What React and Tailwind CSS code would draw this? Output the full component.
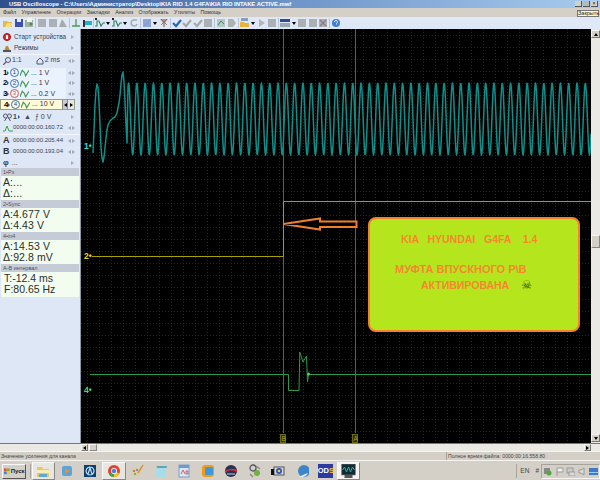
const FONT = "font-['Liberation_Sans',Arial,sans-serif]";

const menuItems = ["Файл", "Управление", "Операции", "Закладки", "Анализ", "Отображать", "Утилиты", "Помощь"];

// waveform of channel 1: the disturbance at the start, then a steady sine
const buildWave = () => {
  const pts = [
    [93, 153], [94, 130], [95, 105], [96, 90], [97, 84], [98, 88], [99, 102], [100, 125], [101, 147], [102, 158], [103, 162],
    [104, 157], [105, 148], [106, 138], [107, 130], [108, 125], [110, 121], [113, 118], [115, 117], [117, 113], [119, 103],
    [120, 95], [121, 84], [122, 75], [123, 72], [124, 82], [125, 102], [126, 125], [127, 143],
  ];
  for (let x = 128; x <= 591; x += 0.5) {
    pts.push([x, 119 + 36 * Math.cos(((x - 132.7) / 8.305) * 2 * Math.PI)]);
  }
  return pts.map((p) => p.join(",")).join(" ");
};

const Ico = ({ children, className = "" }) => (
  <svg viewBox="0 0 10 10" className={"w-[10px] h-[10px] shrink-0 " + className}>
    {children}
  </svg>
);

const Drop = () => <div className="w-0 h-0 border-x-[2px] border-x-transparent border-t-[3px] border-t-black ml-[1px] mr-[1px]" />;

const Sep = () => <div className="w-px h-[10px] bg-[#b9c4d8] mx-[0.5px]" />;

const GrayDoc = ({ x }) => (
  <Ico>
    <rect x="1" y="1" width="8" height="8" fill="#aab0b4" />
    {x && <path d="M2 2l6 6M8 2l-6 6" stroke="#8e7e7e" strokeWidth="1.4" />}
  </Ico>
);

const Check = ({ color }) => (
  <Ico>
    <path d="M1 5l3 3 5-6" fill="none" stroke={color} strokeWidth="2.2" />
  </Ico>
);

const Wavelet = ({ color = "#2f7f5f" }) => (
  <Ico>
    <path d="M0 8h2V3h2l2 5 2-3h2" fill="none" stroke={color} strokeWidth="1.1" />
    <rect x="0" y="0" width="2" height="2" fill="#222" />
  </Ico>
);

const Toolbar = () => (
  <div className="h-[12px] bg-[#dfe8f6] flex items-center pl-[3px] gap-[0.5px]">
    <Ico><path d="M0 3h4l1 1h4v5H0z" fill="#e9b93f" /><path d="M2 9l2-4h6l-2 4z" fill="#f6dc82" /></Ico>
    <Ico><rect x="1" y="1" width="8" height="8" fill="#3d4fb0" /><rect x="3" y="1" width="4" height="3" fill="#e7eaf6" /></Ico>
    <Ico><rect x="1" y="2" width="8" height="7" fill="#9fb0a0" /><rect x="3" y="0" width="5" height="4" fill="#f2f2f2" /><circle cx="7" cy="6" r="1.5" fill="#4d8f4a" /></Ico>
    <Sep />
    <GrayDoc /><GrayDoc />
    <Ico><path d="M1 9l3-8 2 3 3 5z" fill="#a5aba9" /></Ico>
    <Sep />
    <Ico><path d="M5 1v7M1 8h8" stroke="#4a9a5a" strokeWidth="1.3" /></Ico>
    <Ico><rect x="1" y="2" width="2" height="7" fill="#333" /><rect x="3" y="3" width="7" height="4" fill="#19b8c4" /></Ico>
    <Sep />
    <Wavelet /><Drop />
    <Wavelet /><Drop />
    <Ico><path d="M8 6a3 3 0 1 1-3-4h3" fill="none" stroke="#a3aaa8" strokeWidth="1.4" /></Ico>
    <Sep />
    <Ico><rect x="1" y="1" width="8" height="8" fill="#8ea6d8" /><path d="M2 8l6-6" stroke="#e6863b" strokeWidth="1" /></Ico>
    <Drop />
    <Ico><path d="M1 1h8L6 5v4H4V5z" fill="#a99a98" /><path d="M2 1l6 6M8 1L2 7" stroke="#a05a50" strokeWidth="0.8" /></Ico>
    <Sep />
    <Check color="#2a66b8" /><Check color="#a4aaa8" /><Check color="#a4aaa8" /><GrayDoc />
    <Sep />
    <Ico><rect x="1" y="1" width="8" height="8" fill="#b6c6c0" /><path d="M2 7l3-4 3 3" stroke="#3d8f6a" fill="none" /></Ico>
    <Ico><path d="M1 1h5l3 4-3 4H1z" fill="#adb1b0" /></Ico>
    <Sep />
    <Ico><path d="M0 4h4l1 1h4v4H0z" fill="#e4b43c" /><rect x="1" y="0" width="7" height="3" fill="#8a9cc0" /></Ico>
    <Drop />
    <Ico><path d="M2 1l6 4-6 4z" fill="#b3b7b6" /></Ico>
    <GrayDoc />
    <Sep />
    <Ico><rect x="0" y="1" width="10" height="3" fill="#2b4d8f" /><rect x="0" y="5" width="10" height="4" fill="#9aa6b0" /></Ico>
    <Drop />
    <GrayDoc /><GrayDoc /><GrayDoc x />
    <Sep />
    <Ico><circle cx="5" cy="5" r="4" fill="#3f7ed0" /><path d="M3.5 4a1.5 1.5 0 1 1 2 1.4V6.5" stroke="#fff" fill="none" strokeWidth="0.9" /></Ico>
  </div>
);

const ArrowPair = () => (
  <div className="flex items-center gap-[1px] ml-auto mr-[5px] opacity-50">
    <div className="w-0 h-0 border-y-[2.5px] border-y-transparent border-r-[3px] border-r-[#66707a]" />
    <div className="w-0 h-0 border-y-[2.5px] border-y-transparent border-l-[3px] border-l-[#66707a]" />
  </div>
);

const RightArrow = () => (
  <div className="ml-auto mr-[6px] w-0 h-0 border-y-[2.5px] border-y-transparent border-l-[3px] border-l-[#a4acb6]" />
);

const Circle = ({ n, off }) => (
  <div className={"w-[9px] h-[9px] rounded-full border text-[6px] leading-[7px] text-center " + (off ? "border-[#d9534f] text-[#d9534f]" : "border-[#3a6fc0] text-[#1c3d7a]")}>
    {n}
  </div>
);

const Channel = ({ n, off, value, active }) => (
  <div className="h-[10.6px] flex items-center text-[7px]">
    <div className={"flex items-center h-full pl-[3px] flex-1 " + (active ? "bg-[#fffbd8] border border-[#9aa27a] pl-[2px]" : "bg-[#eaf2fd]")}>
      <span className="font-bold text-[8px] text-black leading-none">{n}</span>
      <div className="w-0 h-0 border-y-[2px] border-y-transparent border-l-[2.5px] border-l-[#2b5aa0] mr-[0.5px]" />
      <Circle n={n} off={off} />
      <svg viewBox="0 0 8 8" className="w-[9px] h-[9px] ml-[1px]">
        <path d="M0 7l2-5 2 2 1 3 3-5" fill="none" stroke="#3f9a55" strokeWidth="1" />
      </svg>
      <span className="ml-[2px] text-[#334] whitespace-nowrap">... {value}</span>
      {active && (
        <div className="ml-auto flex h-full">
          <div className="w-[6px] bg-[#c8ccd0] flex items-center justify-center border-x border-[#888]"><div className="w-0 h-0 border-y-[2.5px] border-y-transparent border-r-[3px] border-r-black" /></div>
          <div className="w-[6px] bg-[#e6e6e6] flex items-center justify-center"><div className="w-0 h-0 border-y-[2.5px] border-y-transparent border-l-[3px] border-l-black" /></div>
        </div>
      )}
    </div>
    {active ? <div className="w-[5px]" /> : <div className="w-[14px] flex"><ArrowPair /></div>}
  </div>
);

const Row = ({ children }) => (
  <div className="h-[11px] flex items-center pl-[3px] text-[7px] text-[#3a4350] whitespace-nowrap">{children}</div>
);

const Header = ({ children }) => (
  <div className="h-[8px] mx-px bg-[#c5ccd8] text-[5.5px] leading-[8px] pl-[2px] text-[#4a5260]">{children}</div>
);

const Values = ({ rows }) => (
  <div className="mx-px bg-[#f2fdf0] pl-[2px] py-px text-[10.5px] leading-[11px] text-[#2a2f2a]">
    {rows.map((r) => (
      <div key={r} className="h-[11px] tracking-[0.1px]">{r}</div>
    ))}
  </div>
);

const Sidebar = () => (
  <div className="w-[81px] shrink-0 bg-[#dde7f6] border-r border-[#8d97a6] flex flex-col pt-[2px]">
    <Row>
      <div className="w-[8px] h-[8px] rounded-full bg-[#e03030] border border-[#a01010] mr-[3px] relative">
        <div className="absolute left-[2px] top-[1px] w-[2px] h-[4px] bg-white" />
      </div>
      <span className="text-[6.4px]">Старт устройства</span>
      <RightArrow />
    </Row>
    <Row>
      <svg viewBox="0 0 8 8" className="w-[8px] h-[8px] mr-[3px]"><path d="M1 7l2-5h2l2 5z" fill="#b78d3c" /><rect x="0" y="6" width="8" height="2" fill="#555" /></svg>
      <span className="text-[6.4px]">Режимы</span>
      <RightArrow />
    </Row>
    <div className="h-px bg-[#f4f7fc] my-[0.5px]" />
    <Row>
      <svg viewBox="0 0 8 8" className="w-[8px] h-[8px]"><circle cx="5" cy="3" r="2.5" fill="none" stroke="#556" /><path d="M3 5L0 8" stroke="#556" strokeWidth="1.2" /></svg>
      <span className="ml-px">1:1</span>
      <svg viewBox="0 0 8 8" className="w-[8px] h-[8px] ml-[14px]"><path d="M1 7V4l3-3 3 3v3z" fill="none" stroke="#556" /></svg>
      <span className="ml-[1px]">2 ms</span>
      <ArrowPair />
    </Row>
    <div className="h-[1.5px]" />
    <Channel n="1" value="1 V" />
    <Channel n="2" value="1 V" />
    <Channel n="3" value="0.2 V" off />
    <Channel n="4" value="10 V" active />
    <div className="h-[1.5px]" />
    <Row>
      <svg viewBox="0 0 8 8" className="w-[9px] h-[8px]"><circle cx="2" cy="3" r="2" fill="none" stroke="#556" /><circle cx="6" cy="3" r="2" fill="none" stroke="#556" /><path d="M1 8l2-3M7 8L5 5" stroke="#556" /></svg>
      <span className="ml-[1px] font-bold">1</span>
      <div className="w-0 h-0 border-y-[2px] border-y-transparent border-l-[2.5px] border-l-[#2b5aa0] ml-px" />
      <span className="ml-[4px] font-bold">▲</span>
      <span className="ml-[4px]">⨍ 0 V</span>
      <RightArrow />
    </Row>
    <Row>
      <svg viewBox="0 0 10 8" className="w-[10px] h-[8px]"><path d="M0 7h2l2-5 2 5h4" fill="none" stroke="#3f9a55" /></svg>
      <span className="text-[6px]">0000:00:00.160.72</span>
      <ArrowPair />
    </Row>
    <div className="h-px bg-[#f4f7fc] my-[0.5px]" />
    <Row>
      <span className="font-bold text-[9px] text-[#333] w-[10px]">A</span>
      <span className="text-[6px]">0000:00:00.205.44</span>
      <ArrowPair />
    </Row>
    <Row>
      <span className="font-bold text-[9px] text-[#333] w-[10px]">B</span>
      <span className="text-[6px]">0000:00:00.193.04</span>
      <ArrowPair />
    </Row>
    <Row>
      <span className="font-bold text-[8px] text-[#445]">φ</span>
      <span className="ml-[3px]">...</span>
      <RightArrow />
    </Row>
    <Header>1•Px</Header>
    <Values rows={["A:...", "Δ:..."]} />
    <Header>2•Sync</Header>
    <Values rows={["A:4.677 V", "Δ:4.43 V"]} />
    <Header>4•in4</Header>
    <Values rows={["A:14.53 V", "Δ:92.8 mV"]} />
    <Header>A-B интервал</Header>
    <div className="mx-px bg-[#f2fdf0] pl-[3px] pt-[1px] pb-[2px] text-[10.5px] leading-[11px] text-[#2a2f2a]">
      <div>T:-12.4 ms</div>
      <div>F:80.65 Hz</div>
    </div>
  </div>
);

const Plot = () => (
  <svg viewBox="81 29 510 414" className="absolute inset-0 w-full h-full">
    <defs>
      <pattern id="grid" x="81" y="29" width="12" height="12" patternUnits="userSpaceOnUse">
        <rect x="0" y="6" width="1" height="1" fill="#272727" />
        <rect x="3" y="6" width="1" height="1" fill="#272727" />
        <rect x="6" y="6" width="1" height="1" fill="#272727" />
        <rect x="9" y="6" width="1" height="1" fill="#272727" />
        <rect x="6" y="0" width="1" height="1" fill="#272727" />
        <rect x="6" y="3" width="1" height="1" fill="#272727" />
        <rect x="6" y="9" width="1" height="1" fill="#272727" />
      </pattern>
    </defs>
    <rect x="81" y="29" width="510" height="414" fill="url(#grid)" />
    <path d="M283.5 29V433M355.5 29V433" stroke="#6b6b00" strokeWidth="1" />
    <polyline points={buildWave()} fill="none" stroke="#0f8f8a" strokeWidth="1.5" strokeLinejoin="round" />
    <path d="M92 256.5H283.5V201.5H591" fill="none" stroke="#a8a000" strokeWidth="1" />
    <path d="M90 374.5H288.5V390.5H299L299.8 352L303 362L306.5 356L307.5 382L308.5 374.5H591" fill="none" stroke="#2f9a45" strokeWidth="1" />
    <circle cx="308.5" cy="374" r="1.5" fill="#4fd070" />
    <path d="M283.5 224L320 218.5V221.5H356.5V227H320V229.5Z" fill="#000" stroke="#ef7f2c" strokeWidth="2" />
    <rect x="280.5" y="434.5" width="5" height="8" fill="#2c2c06" stroke="#6a6a10" />
    <rect x="352.5" y="434.5" width="5" height="8" fill="#2c2c06" stroke="#6a6a10" />
    <text x="281.5" y="441" fontSize="6.5" fontFamily="Liberation Sans" fill="#a8a820">B</text>
    <text x="353.5" y="441" fontSize="6.5" fontFamily="Liberation Sans" fill="#a8a820">A</text>
    <text x="84" y="149" fontSize="8.5" fontWeight="bold" fontFamily="Liberation Sans" fill="#2fd8d0">1•</text>
    <text x="84" y="259" fontSize="8.5" fontWeight="bold" fontFamily="Liberation Sans" fill="#e4dc30">2•</text>
    <text x="84" y="393" fontSize="8.5" fontWeight="bold" fontFamily="Liberation Sans" fill="#58d070">4•</text>
  </svg>
);

const Note = () => (
  <div className="absolute left-[287px] top-[188px] w-[212px] h-[115px] bg-[#b5e61d] border-2 border-[#f5812a] rounded-[8px] text-[#f5862e] font-bold leading-[12px] whitespace-pre">
    <div className="mt-[14px] ml-[31px] text-[10.5px]">KIA   HYUNDAI   G4FA    1.4</div>
    <div className="mt-[18px] ml-[25px] text-[11px]">МУФТА ВПУСКНОГО Р\В</div>
    <div className="mt-[4px] ml-[51px] text-[10.5px] flex items-center">
      АКТИВИРОВАНА
      <span className="ml-[12px] text-[12px] text-[#2f5a10] font-['DejaVu_Sans',sans-serif] font-normal">☠</span>
    </div>
  </div>
);

const VScroll = () => (
  <div className="w-[9px] shrink-0 bg-[#ebe9e4] flex flex-col items-stretch py-px">
    <div className="h-[8px] bg-[#d4d0c8] border border-[#f4f4f0] border-b-[#777] border-r-[#777] flex items-center justify-center">
      <div className="w-0 h-0 border-x-[2px] border-x-transparent border-b-[3px] border-b-black" />
    </div>
    <div className="flex-1 flex flex-col justify-start pt-[197px]">
      <div className="h-[13px] bg-[#d4d0c8] border border-[#f4f4f0] border-b-[#888] border-r-[#888]" />
    </div>
    <div className="h-[8px] bg-[#d4d0c8] border border-[#f4f4f0] border-b-[#777] border-r-[#777] flex items-center justify-center">
      <div className="w-0 h-0 border-x-[2px] border-x-transparent border-t-[3px] border-t-black" />
    </div>
  </div>
);

const HScroll = () => (
  <div className="h-[8px] shrink-0 flex bg-[#ebe9e4] border-t border-[#777] pl-[81px] pr-[9px]">
    <div className="w-[7px] bg-[#d4d0c8] border border-[#f4f4f0] border-b-[#777] border-r-[#777] flex items-center justify-center">
      <div className="w-0 h-0 border-y-[2px] border-y-transparent border-r-[3px] border-r-black" />
    </div>
    <div className="w-[8px] ml-[1px] bg-[#d4d0c8] border border-[#f4f4f0] border-b-[#888] border-r-[#888]" />
    <div className="flex-1" />
    <div className="w-[7px] bg-[#d4d0c8] border border-[#f4f4f0] border-b-[#777] border-r-[#777] flex items-center justify-center">
      <div className="w-0 h-0 border-y-[2px] border-y-transparent border-l-[3px] border-l-black" />
    </div>
  </div>
);

const Task = ({ children, active }) => (
  <div className={"w-[23.5px] h-[18px] flex items-center justify-center shrink-0 " + (active ? "bg-[#e8e6e0] border border-[#fafafa] border-r-[#888] border-b-[#888]" : "")}>
    <svg viewBox="0 0 14 14" className="w-[14px] h-[14px]">{children}</svg>
  </div>
);

const Taskbar = () => (
  <div className="h-[20px] shrink-0 bg-[#d4d0c8] border-t border-[#f6f5f1] flex items-center pl-[1.5px] pt-px">
    <div className="w-[24px] h-[15px] border border-[#fafafa] border-r-[#555] border-b-[#555] flex items-center pl-[1px] text-[6px] font-bold text-[#222] gap-[1px]">
      <svg viewBox="0 0 8 8" className="w-[7px] h-[7px]">
        <rect width="3.5" height="3.5" fill="#e0562c" /><rect x="4" width="3.5" height="3.5" fill="#6cb33f" />
        <rect y="4" width="3.5" height="3.5" fill="#3c86d8" /><rect x="4" y="4" width="3.5" height="3.5" fill="#f2c230" />
      </svg>
      Пуск
    </div>
    <div className="w-px h-[14px] bg-[#a8a49c] ml-[4px] mr-[1px]" />
    <Task active><path d="M1 3h5l1 2h6v8H1z" fill="#e8c860" /><rect x="1" y="6" width="12" height="3" fill="#f8eeb0" /><rect x="3" y="10" width="8" height="3" fill="#5fa8d8" /></Task>
    <Task><rect x="2" y="2" width="10" height="10" rx="2" fill="#5aa6dc" /><path d="M5 4l5 3-5 3z" fill="#f48c1e" /></Task>
    <Task><rect x="1" y="1" width="12" height="12" fill="#0e3f6e" /><path d="M7 3a4 4 0 1 0 .1 0zM5 10l2-6 2 6" fill="none" stroke="#bfe0f4" strokeWidth="1.2" /></Task>
    <Task active><circle cx="7" cy="7" r="6" fill="#e0432f" /><path d="M7 7L2 10.5A6 6 0 0 0 7 13z" fill="#3ba650" /><path d="M7 7L12.5 9.5A6 6 0 0 1 7 13z" fill="#f4c42c" /><circle cx="7" cy="7" r="3" fill="#fff" /><circle cx="7" cy="7" r="2.2" fill="#3f82e0" /></Task>
    <Task><ellipse cx="6" cy="8" rx="5" ry="4.5" fill="#d8cfa6" /><circle cx="4" cy="7" r="1" fill="#d94f3c" /><circle cx="7" cy="6" r="1" fill="#3c8ad8" /><circle cx="5" cy="10" r="1" fill="#4fa64a" /><path d="M8 9l5-8" stroke="#d8862c" strokeWidth="1.4" /></Task>
    <Task><path d="M3 2h10l-2 11H1z" fill="#a8dce8" /><path d="M3 2h10l-.4 2H2.6z" fill="#58a8b8" /></Task>
    <Task><rect x="2" y="1" width="10" height="12" fill="#d8e6f6" stroke="#7fa0c8" /><rect x="2" y="1" width="10" height="3" fill="#6f9ad0" /><path d="M4 10l2-4 2 4M9 7h2v3H9z" stroke="#d0606a" fill="none" /></Task>
    <Task><rect x="1" y="1" width="12" height="12" rx="3" fill="#f09a20" /><rect x="4" y="3" width="8" height="8" rx="1" fill="#3c9ad8" /></Task>
    <Task><circle cx="7" cy="7" r="6" fill="#27304f" /><path d="M1 8c3-3 8-3 12-1" stroke="#d8344c" strokeWidth="1.5" fill="none" /><path d="M3 10h8" stroke="#c8d0e0" /></Task>
    <Task><circle cx="5" cy="4" r="3" fill="none" stroke="#556" strokeWidth="1.3" /><circle cx="9" cy="9" r="3" fill="#6cb33f" /><path d="M8 2l4 3M2 10l3 3" stroke="#888" strokeWidth="1.3" /></Task>
    <Task><rect x="3" y="3" width="10" height="8" fill="#d8d8d8" stroke="#555" /><circle cx="8" cy="7" r="3" fill="#2a4fc0" /><circle cx="8" cy="7" r="1.3" fill="#f2d030" /><rect x="0" y="5" width="3" height="6" fill="#111" /></Task>
    <Task><circle cx="9" cy="7" r="6" fill="#3c86c8" /><path d="M4 13c3 1 7 0 9-4-3 1-6 2-9 4z" fill="#e4eef8" /></Task>
    <div className="w-[23.5px] h-[18px] flex items-center justify-center shrink-0">
      <div className="w-[15px] h-[14px] bg-[#2f3aa0] text-[7.5px] font-bold leading-[14px] text-center text-white">OD<span className="text-[#f2c230]">S</span></div>
    </div>
    <div className="w-[23px] h-[18px] ml-[-0.5px] flex items-center justify-center shrink-0 bg-[#f4f3ef] border border-[#fafafa] border-r-[#888] border-b-[#888]">
      <svg viewBox="0 0 14 14" className="w-[15px] h-[14px]">
        <rect x="0" y="0" width="14" height="11" fill="#112a34" stroke="#888" strokeWidth="0.6" />
        <path d="M1 6l2-3 2 5 2-5 2 5 2-5 2 3" fill="none" stroke="#1fb8a0" />
        <rect x="3" y="11" width="8" height="3" fill="#555" />
      </svg>
    </div>
    <div className="ml-auto flex items-center text-[6.5px] text-[#444]">
      <div className="w-px h-[14px] bg-[#a8a49c] mr-[3px]" />
      <span>EN</span>
      <span className="ml-[6px]">#</span>
      <div className="ml-[2px] h-[15px] px-px border border-[#a8a49c] border-r-[#f6f5f1] border-b-[#f6f5f1] flex items-center gap-[2.5px]">
        <svg viewBox="0 0 9 9" className="w-[9px] h-[9px]"><rect x="1" y="1" width="6" height="6" fill="#888" /><circle cx="6" cy="6" r="2.5" fill="#4faa3c" /></svg>
        <svg viewBox="0 0 9 9" className="w-[9px] h-[9px]"><path d="M2 1v8M2 1h6v4H2" fill="#eee" stroke="#999" /></svg>
        <svg viewBox="0 0 9 9" className="w-[9px] h-[9px]"><rect x="1" y="1" width="6" height="5" fill="#ccc" stroke="#999" /><rect x="3" y="5" width="6" height="4" fill="#ddd" stroke="#999" /></svg>
        <svg viewBox="0 0 9 9" className="w-[9px] h-[9px]"><path d="M1 3h2l3-2v7L3 6H1z" fill="#ddd" stroke="#999" /></svg>
        <svg viewBox="0 0 9 9" className="w-[9px] h-[9px]"><rect x="0" y="1" width="9" height="7" fill="#3c7cc8" /><rect x="0" y="5" width="9" height="1" fill="#a8c8e8" /></svg>
      </div>
    </div>
  </div>
);

export default function App() {
  return (
    <div className={"relative w-[600px] h-[480px] overflow-hidden flex flex-col bg-[#d4d0c8] " + FONT}>
      <div className="h-[8px] shrink-0 bg-gradient-to-r from-[#2d4f8e] via-[#7096ca] to-[#a8ccee] text-white text-[5.8px] font-bold leading-[8px] pl-[9px] whitespace-nowrap relative">
        USB Oscilloscope - C:\Users\Администратор\Desktop\KIA RIO 1.4 G4FA\KIA RIO INTAKE ACTIVE.mwf
        <div className="absolute right-[2px] top-[1px] flex gap-px">
          <div className="w-[7px] h-[6px] bg-[#d4d0c8] border-b border-r border-[#555]" />
          <div className="w-[7px] h-[6px] bg-[#b8b8b4] border-b border-r border-[#555]" />
          <div className="w-[7px] h-[6px] bg-[#d4d0c8] border-b border-r border-[#555] text-black text-[5px] leading-[5px] text-center font-normal">×</div>
        </div>
      </div>
      <div className="h-[9px] shrink-0 bg-[#d4d0c8] flex items-center pl-[3px] gap-[5.5px] text-[5.3px] text-[#333]">
        {menuItems.map((m) => (
          <span key={m}>{m}</span>
        ))}
      </div>
      <Toolbar />
      <div className="flex flex-1 min-h-0">
        <Sidebar />
        <div className="flex-1 relative bg-black">
          <Plot />
          <Note />
        </div>
        <VScroll />
      </div>
      <HScroll />
      <div className="h-[9px] shrink-0 flex text-[5.15px] leading-[8px] text-[#444] border-t border-[#f6f5f1]">
        <div className="w-[446px] pl-px">Значение усиления для канала</div>
        <div className="flex-1 border-l border-[#a8a49c] pl-[1px]">Полное время файла: 0000:00:16.558.80</div>
      </div>
      <Taskbar />
      <div className="absolute left-[577px] top-[10px] w-[22px] h-[7px] bg-[#fbf8d8] border border-[#777] text-[5.5px] leading-[5px] text-center text-[#222]">Закрыть</div>
    </div>
  );
}
